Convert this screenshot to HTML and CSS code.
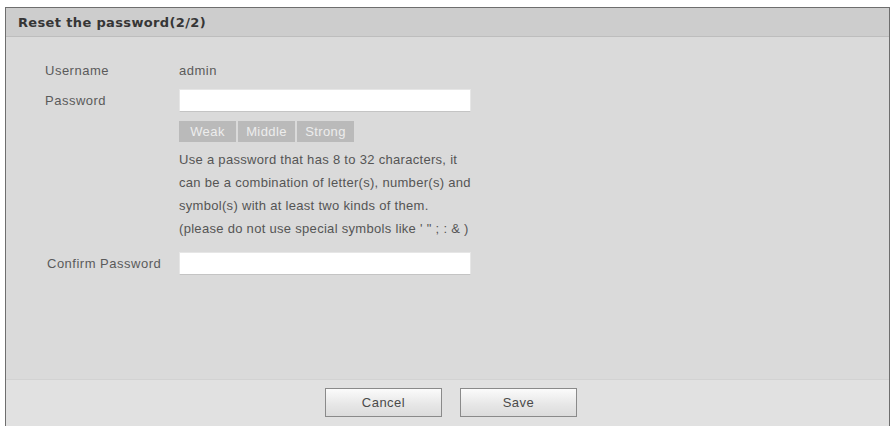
FILE: index.html
```html
<!DOCTYPE html>
<html>
<head>
<meta charset="utf-8">
<link rel="stylesheet" href="styles.css">
</head>
<body>
<div class="dialog">
  <div class="title">Reset the password(2/2)</div>
  <div class="content">
    <div class="row">
      <div class="label">Username</div>
      <div class="value">admin</div>
    </div>
    <div class="row">
      <div class="label">Password</div>
      <div class="value"><div class="input"></div></div>
    </div>
    <div class="sub">
      <div class="strength">
        <span class="seg seg-weak">Weak</span>
        <span class="seg seg-mid">Middle</span>
        <span class="seg seg-strong">Strong</span>
      </div>
      <div class="hint">
        <div>Use a password that has 8 to 32 characters, it</div>
        <div>can be a combination of letter(s), number(s) and</div>
        <div>symbol(s) with at least two kinds of them.</div>
        <div>(please do not use special symbols like ' " ; : &amp; )</div>
      </div>
    </div>
    <div class="row row-confirm">
      <div class="label">Confirm Password</div>
      <div class="value"><div class="input"></div></div>
    </div>
  </div>
  <div class="footer">
    <button class="btn">Cancel</button>
    <button class="btn">Save</button>
  </div>
</div>
</body>
</html>
```
FILE: styles.css
```css
html, body {
  margin: 0;
  padding: 0;
  background: #ffffff;
  font-family: "Liberation Sans", Arial, sans-serif;
}
.dialog {
  margin: 7px 5px 0 5px;
  height: 419px;
  box-sizing: border-box;
  border: 1px solid #6e6e6e;
  border-bottom: none;
  background: #dadada;
  display: flex;
  flex-direction: column;
}
.title {
  height: 29px;
  box-sizing: border-box;
  background: #cdcdcd;
  border-bottom: 1px solid #bdbdbd;
  padding-left: 12px;
  font-family: "DejaVu Sans", Verdana, sans-serif;
  font-weight: bold;
  font-size: 13px;
  letter-spacing: 0.35px;
  line-height: 29px;
  color: #363636;
}
.content {
  flex: 1;
  padding: 18px 0 0 39px;
  color: #5a5a5a;
  font-size: 13px;
  letter-spacing: 0.5px;
}
.row {
  display: flex;
  align-items: center;
  height: 30px;
}
.label {
  width: 134px;
}
.value {
  letter-spacing: 0.5px;
}
.input {
  width: 290px;
  height: 21px;
  background: #ffffff;
  border: 1px solid #e6e6e6;
  border-bottom-color: #c4c4c4;
}
.sub {
  padding-left: 134px;
  padding-top: 6px;
}
.strength {
  display: flex;
  gap: 2px;
  height: 21px;
}
.seg {
  width: 57px;
  background: #bababa;
  color: #ededed;
  font-size: 13px;
  letter-spacing: 0.4px;
  line-height: 21px;
  text-align: center;
}
.hint {
  margin-top: 6px;
  font-size: 13px;
  letter-spacing: 0.3px;
  line-height: 23px;
  color: #555555;
}
.row-confirm {
  margin-top: 8px;
}
.row-confirm .label {
  padding-left: 2px;
  width: 132px;
}
.footer {
  height: 47px;
  box-sizing: border-box;
  background: #e1e1e1;
  border-top: 1px solid #d2d2d2;
  display: flex;
  justify-content: center;
  align-items: flex-start;
  gap: 18px;
  padding-top: 8px;
  padding-left: 7px;
}
.btn {
  width: 117px;
  height: 29px;
  border: 1px solid #8a8a8a;
  background: linear-gradient(#fbfbfb, #e6e6e6 60%, #dcdcdc);
  font-family: "Liberation Sans", Arial, sans-serif;
  font-size: 13px;
  letter-spacing: 0.5px;
  color: #4a4a4a;
  padding: 0;
}
```
